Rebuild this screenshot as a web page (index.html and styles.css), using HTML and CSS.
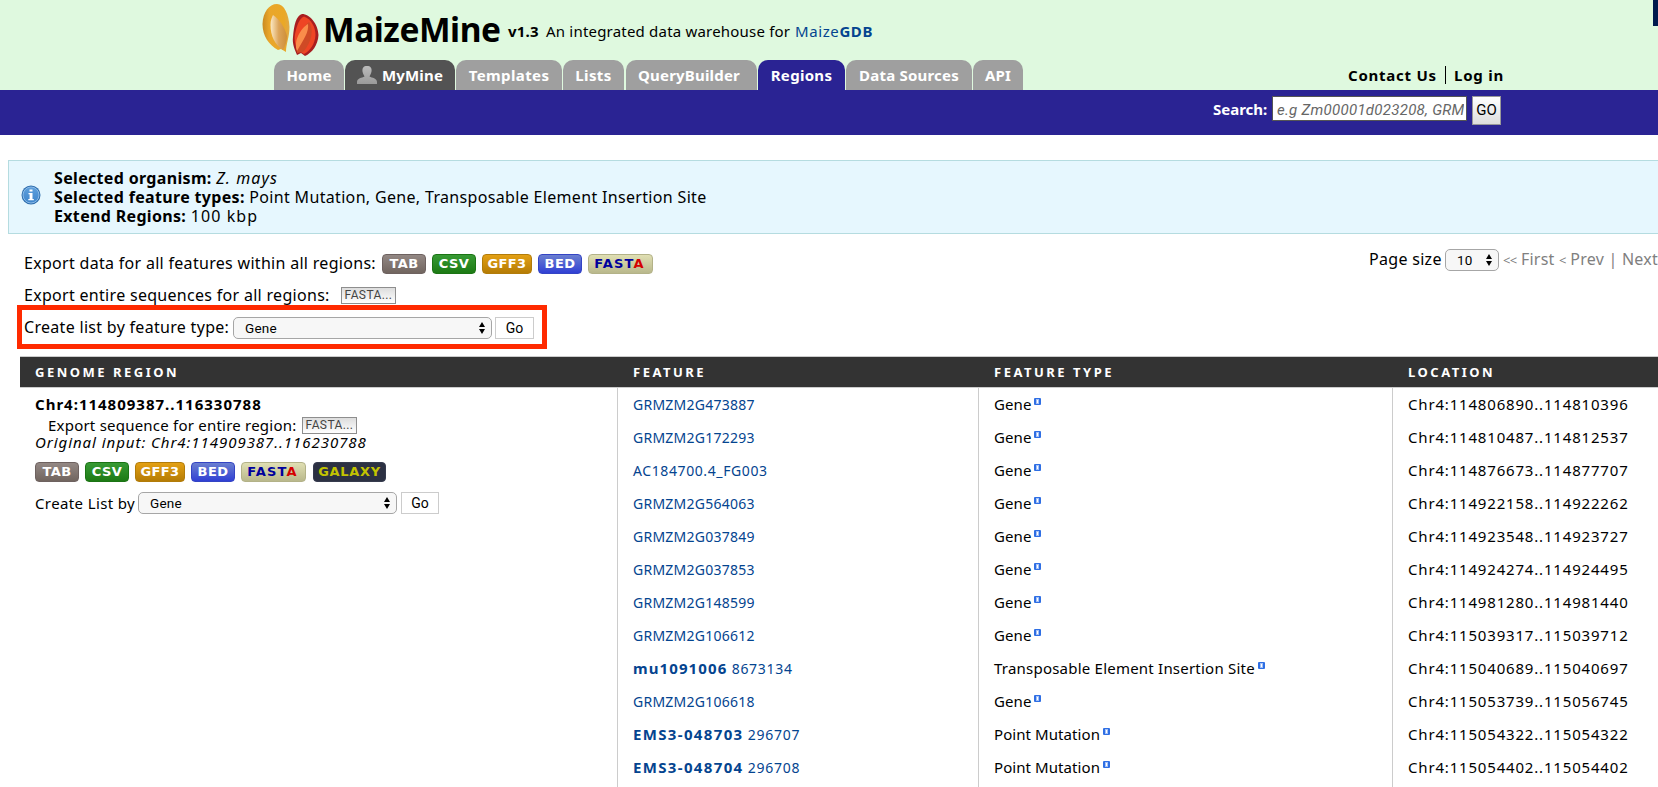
FILE: index.html
```
<!DOCTYPE html>
<html lang="en">
<head>
<meta charset="utf-8">
<title>MaizeMine: Regions</title>
<link rel="stylesheet" href="styles.css">
</head>
<body>
<svg width="0" height="0" class="defs">
  <defs>
    <linearGradient id="yellow" x1="0" x2="1"><stop offset="0" stop-color="#c98a22"/><stop offset=".25" stop-color="#e9a62a"/><stop offset=".8" stop-color="#eaa826"/><stop offset="1" stop-color="#dfa94a"/></linearGradient>
    <linearGradient id="shine" x1="0" x2="1"><stop offset="0" stop-color="#fbe9c4"/><stop offset=".5" stop-color="#dca45a"/><stop offset="1" stop-color="#cf8f38"/></linearGradient>
    <linearGradient id="person" x1="0" x2="0" y1="0" y2="1"><stop offset="0" stop-color="#bbb"/><stop offset="1" stop-color="#9a9a9a"/></linearGradient>
    <linearGradient id="blue" x1="0" x2="0" y1="0" y2="1"><stop offset="0" stop-color="#5fa0dc"/><stop offset="1" stop-color="#3f86cc"/></linearGradient>
    <symbol id="tip" viewBox="0 0 7 7"><rect width="7" height="7" rx="1" fill="#2f6fe4"/><rect x="2" y="1" width="3" height="5" fill="#a3c0f6"/><rect x="3" y="2" width="1" height="3" fill="#fff"/></symbol>
    <symbol id="arrows" viewBox="0 0 6 12"><path d="M3 0 6 5H0zM3 12 6 7H0z"/></symbol>
  </defs>
</svg>
<header class="head">
  <div class="brand">
    <svg class="logo" width="60" height="58" viewBox="0 0 60 58">
      <path d="M16 4C23 4 28 14 28.500 27C28.500 37 25 44 25 52L20 49L17 50C8 45 1.500 36 1.500 24C2 12 8 4 16 4Z" fill="url(#yellow)"/>
      <path d="M12 15C17 18 24 27 26 36C26 42 24 46 22 50C14 45 9.500 36 9.500 25C9.500 20 11 17 12 15Z" fill="url(#shine)"/>
      <path d="M41 14C49 14 57 24 57.500 35C57 45 51 53 44 56L40 53L36 55C34 50 31 44 32 37C33 25 35 16 41 14Z" fill="#a81e20"/>
      <path d="M43 16.500C50 19 54.500 27 54.500 35C54 44 49 51 43 54L38 51C34 46 33 40 34 34C36 25 38 19 43 16.500Z" fill="#ee4524"/>
      <path d="M48 22C53 29 51 42 42 52L36 53C34 42 41 28 48 22Z" fill="#cf4a25"/>
      <path d="M47 24C48 32 43 39 36 51C32 41 40 28 47 24Z" fill="#fa8c4a"/>
    </svg>
    <h1 class="title">MaizeMine</h1>
    <span class="version">v1.3</span>
    <span class="tagline">An integrated data warehouse for</span>
    <a class="gdb">Maize<b>GDB</b></a>
    <span class="corner"></span>
  </div>
  <div class="navrow">
    <nav class="tabs">
      <a class="tab t-home">Home</a>
      <a class="tab t-mine"><svg width="20" height="18" viewBox="0 0 20 18"><path d="M10 0C13.500 0 15 2 14.500 5.500C14 8 13 9 12.500 10.500C15 12 20 12 20 16V18H0V16C0 12 5 12 7.500 10.500C7 9 6 8 5.500 5.500C5 2 6.500 0 10 0Z" fill="url(#person)"/></svg>MyMine</a>
      <a class="tab t-templates">Templates</a>
      <a class="tab t-lists">Lists</a>
      <a class="tab t-query">QueryBuilder</a>
      <a class="tab t-regions">Regions</a>
      <a class="tab t-data">Data Sources</a>
      <a class="tab t-api">API</a>
    </nav>
    <div class="account"><a class="contact">Contact Us</a><a class="login">Log in</a></div>
  </div>
</header>
<div class="searchbar">
  <label class="searchlabel">Search:</label>
  <div class="searchbox"><span>e.g Zm00001d023208, GRM</span></div>
  <div class="searchgo">GO</div>
</div>
<section class="info">
  <svg class="infoicon" width="20" height="20" viewBox="0 0 20 20"><circle cx="10" cy="10" r="9.500" fill="#2f6fae"/><circle cx="10" cy="10" r="8" fill="url(#blue)" stroke="#8cbbe8"/><path d="M8.500 4.500h3v2h-3zM7.500 8h4v6h1.300v1.300H7.300V14h1.300V9.300H7.500z" fill="#fff"/></svg>
  <div class="infotext">
    <p><b>Selected organism:</b> <i class="wide">Z. mays</i></p>
    <p><b>Selected feature types:</b> <span>Point Mutation, Gene, Transposable Element Insertion Site</span></p>
    <p><b>Extend Regions:</b> <span class="wide">100 kbp</span></p>
  </div>
</section>
<section class="tools">
  <div class="exports">
    <div class="line l1"><span class="lab1">Export data for all features within all regions:</span>
      <span class="badges"><a class="badge tab-b">TAB</a><a class="badge csv">CSV</a><a class="badge gff">GFF3</a><a class="badge bed">BED</a><a class="badge fasta">FAST<em>A</em></a></span></div>
    <div class="line l2"><span class="lab2">Export entire sequences for all regions:</span><span class="fbtn">FASTA...</span></div>
    <div class="line framed"><span class="lab3">Create list by feature type:</span><span class="select">Gene<svg width="6" height="12"><use href="#arrows"/></svg></span><span class="go">Go</span></div>
  </div>
  <div class="pager"><span class="psize">Page size</span><span class="select small">10<svg width="6" height="12"><use href="#arrows"/></svg></span><span class="plinks"><small>&lt;&lt;</small> First <small>&lt;</small> Prev | Next</span></div>
</section>
<main class="results">
  <div class="thead"><span>GENOME REGION</span><span>FEATURE</span><span>FEATURE TYPE</span><span>LOCATION</span></div>
  <div class="tbody">
    <div class="region">
      <b class="rname">Chr4:114809387..116330788</b>
      <div class="rexport"><span class="lab4">Export sequence for entire region:</span><span class="fbtn">FASTA...</span></div>
      <i class="rinput">Original input: Chr4:114909387..116230788</i>
      <div class="badges"><a class="badge tab-b">TAB</a><a class="badge csv">CSV</a><a class="badge gff">GFF3</a><a class="badge bed">BED</a><a class="badge fasta">FAST<em>A</em></a><a class="badge galaxy">GALAXY</a></div>
      <div class="rlist"><span class="lab5">Create List by</span><span class="select">Gene<svg width="6" height="12"><use href="#arrows"/></svg></span><span class="go">Go</span></div>
    </div>
    <div class="col feature">
      <a>GRMZM2G473887</a><a>GRMZM2G172293</a><a class="ac">AC184700.4_FG003</a><a>GRMZM2G564063</a><a>GRMZM2G037849</a><a>GRMZM2G037853</a><a>GRMZM2G148599</a><a>GRMZM2G106612</a><a class="named"><b>mu1091006</b> 8673134</a><a>GRMZM2G106618</a><a class="named ems"><b>EMS3-048703</b> 296707</a><a class="named ems"><b>EMS3-048704</b> 296708</a>
    </div>
    <div class="col type">
      <span>Gene<svg><use href="#tip"/></svg></span><span>Gene<svg><use href="#tip"/></svg></span><span>Gene<svg><use href="#tip"/></svg></span><span>Gene<svg><use href="#tip"/></svg></span><span>Gene<svg><use href="#tip"/></svg></span><span>Gene<svg><use href="#tip"/></svg></span><span>Gene<svg><use href="#tip"/></svg></span><span>Gene<svg><use href="#tip"/></svg></span><span class="long">Transposable Element Insertion Site<svg><use href="#tip"/></svg></span><span>Gene<svg><use href="#tip"/></svg></span><span>Point Mutation<svg><use href="#tip"/></svg></span><span>Point Mutation<svg><use href="#tip"/></svg></span>
    </div>
    <div class="col loc">
      <span>Chr4:114806890..114810396</span><span>Chr4:114810487..114812537</span><span>Chr4:114876673..114877707</span><span>Chr4:114922158..114922262</span><span>Chr4:114923548..114923727</span><span>Chr4:114924274..114924495</span><span>Chr4:114981280..114981440</span><span>Chr4:115039317..115039712</span><span>Chr4:115040689..115040697</span><span>Chr4:115053739..115056745</span><span>Chr4:115054322..115054322</span><span>Chr4:115054402..115054402</span>
    </div>
  </div>
</main>
</body>
</html>
```
FILE: styles.css
```
* { box-sizing: border-box; }
body { margin: 0; width: 1658px; height: 787px; overflow: hidden; background: #fff; color: #000; font: 15px/19px "Noto Sans", sans-serif; white-space: nowrap; }
p, h1 { margin: 0; }
em { font-style: normal; }
.defs { display: block; }

.head { height: 90px; background: #dff9df; display: flex; flex-direction: column; }
.brand { height: 60px; display: flex; padding-left: 261px; }
.logo { flex: none; }
.title { width: 185px; margin-left: 2px; font-size: 33.500px; line-height: 58px; letter-spacing: -.45px; }
.version { width: 38px; font-weight: bold; line-height: 63px; letter-spacing: .2px; }
.tagline { width: 249px; line-height: 63px; letter-spacing: .2px; }
.gdb { color: #04448f; line-height: 63px; letter-spacing: .6px; }
.corner { width: 5px; height: 26px; margin-left: auto; background: #001a4e; }
.navrow { height: 30px; display: flex; }
.tabs { display: flex; padding-left: 274px; gap: 1px; width: 1348px; }
.tab { height: 30px; display: flex; align-items: center; justify-content: center; background: #9f9f9f; color: #fff; font-weight: bold; border-radius: 10px 10px 0 0; letter-spacing: .2px; }
.t-home { width: 70px; }
.t-mine { width: 110px; background: #535353; gap: 5px; }
.t-templates { width: 106px; letter-spacing: .4px; }
.t-lists { width: 61px; margin-right: 1px; letter-spacing: .4px; }
.t-query { width: 131px; padding-right: 5px; letter-spacing: .2px; }
.t-regions { width: 87px; background: #2a2393; letter-spacing: .3px; }
.t-data { width: 126px; }
.t-api { width: 50px; }
.account { display: flex; align-items: center; font-weight: bold; letter-spacing: .75px; }
.contact { width: 98px; border-right: 1px solid #000; line-height: 18px; }
.login { margin-left: 8px; }

.searchbar { height: 45px; background: #2a2393; display: flex; padding: 6px 0 0 1213px; }
.searchlabel { width: 59px; color: #fff; font-weight: bold; line-height: 26px; }
.searchbox { width: 195px; height: 25px; background: #fff; border: 1px solid #555; color: #666; font: italic 15px/26px Roboto, sans-serif; padding: 0 2px 0 4px; letter-spacing: .28px; }
.searchbox span { display: block; height: 23px; overflow: hidden; }
.searchgo { width: 29px; height: 29px; margin-left: 5px; border: 1px solid #999; background: linear-gradient(#fff, #ddd); font: 15px/27px Roboto, sans-serif; text-align: center; }

.info { margin: 25px 0 0 8px; height: 74px; border: 1px solid #b5dce0; border-right: 0; background: #e6f7fe; display: flex; padding: 8px 0 0 12px; }
.infoicon { margin-top: 16px; }
.infotext { margin-left: 13px; line-height: 19px; font-size: 16px; letter-spacing: .33px; }
.infotext .wide { letter-spacing: 1.100px; }

.tools { height: 122px; display: flex; justify-content: space-between; font-size: 16px; letter-spacing: .3px; }
.exports { width: 547px; }
.line { display: flex; align-items: center; padding-left: 24px; }
.l1 { height: 39px; margin-top: 10px; width: 700px; }
.lab1 { width: 358px; }
.l2 { height: 22px; padding-top: 2px; }
.lab2 { width: 317px; }
.framed { margin-left: 17px; height: 44px; border: 5px solid #ff2a00; padding-left: 2px; width: 530px; }
.lab3 { width: 209px; }
.framed .select, .framed .go { margin-top: 1px; }
.badges { display: flex; gap: 6px; }
.badge { width: 44px; height: 20px; border-radius: 4px; color: #fff; font: bold 13px/18px "DejaVu Sans", sans-serif; letter-spacing: .4px; text-align: center; border: 1px solid; }
.tab-b { background: linear-gradient(#938884, #71655f); border-color: #6e6260; }
.csv { background: linear-gradient(#379a34, #1d7a14); border-color: #1b7414; }
.gff { width: 50px; background: linear-gradient(#e3a014, #b57c05); border-color: #b27c0a; }
.bed { background: linear-gradient(#6a7fd0, #3040d4); border-color: #3444c4; }
.fasta { width: 65px; background: linear-gradient(#e0dfb3, #b9b88c); border-color: #b3b288; color: #00009c; letter-spacing: 1.200px; padding-right: 2px; }
.fasta em { color: #d40000; }
.galaxy { width: 73px; margin-left: 1px; background: #2c3143; border-color: #363b4e; color: #c3c300; letter-spacing: .7px; }
.fbtn { width: 55px; height: 17px; border: 1px solid #8e8e8e; background: linear-gradient(#ddd, #fff); color: #444; font: 12px/15px Roboto, sans-serif; text-align: center; letter-spacing: .4px; }
.select { width: 259px; height: 22px; border: 1px solid #a6a6a6; border-radius: 5px; background: #f7f7f7; display: flex; align-items: center; justify-content: space-between; padding: 0 6px 0 11px; font: 13.500px/20px Roboto, sans-serif; letter-spacing: .2px; }
.go { width: 39px; height: 22px; margin-left: 3px; border: 1px solid #ccc; font: 14px/20px Roboto, sans-serif; text-align: center; letter-spacing: 0; }
.pager { width: 289px; display: flex; height: 22px; margin-top: 15px; line-height: 21px; overflow: hidden; }
.psize { width: 77px; }
.select.small { width: 54px; flex: none; }
.plinks { margin-left: 4px; color: #808080; letter-spacing: .25px; }
.plinks small { font-size: 13px; letter-spacing: -.7px; }

.results { margin-left: 20px; }
.thead { height: 32px; border: 1px solid #ccc; border-width: 1px 0; background: #333; color: #fff; display: grid; grid-template-columns: 598px 361px 414px 1fr; padding-left: 15px; font-weight: bold; font-size: 13px; line-height: 31px; letter-spacing: 2.500px; }
.tbody { display: grid; grid-template-columns: 597px 361px 414px 1fr; height: 399px; }
.region { padding: 7px 0 0 15px; display: flex; flex-direction: column; }
.rname { letter-spacing: 1px; }
.rexport { display: flex; padding-left: 13px; height: 20px; align-items: center; margin-top: 1px; letter-spacing: .22px; }
.lab4 { width: 254px; }
.rinput { line-height: 17px; margin-top: -1px; letter-spacing: .95px; }
.region .badges { margin-top: 11px; }
.rlist { display: flex; margin-top: 10px; align-items: center; letter-spacing: .38px; }
.lab5 { width: 103px; }
.rlist .go { margin-left: 4px; width: 38px; }
.col { border-left: 1px solid #ccc; padding-left: 15px; display: flex; flex-direction: column; line-height: 33px; }
.col > * { height: 33px; flex: none; }
.feature { color: #04448f; font-size: 14px; letter-spacing: .25px; }
.feature .ac { letter-spacing: .6px; }
.feature .named { letter-spacing: .7px; }
.feature b { font-size: 15px; letter-spacing: 1.100px; }
.feature .ems b { letter-spacing: 1.350px; }
.type { letter-spacing: .08px; }
.type .long { letter-spacing: .22px; }
.type svg { width: 7px; height: 7px; margin-left: 3px; vertical-align: 5px; }
.loc { letter-spacing: .82px; }
```
